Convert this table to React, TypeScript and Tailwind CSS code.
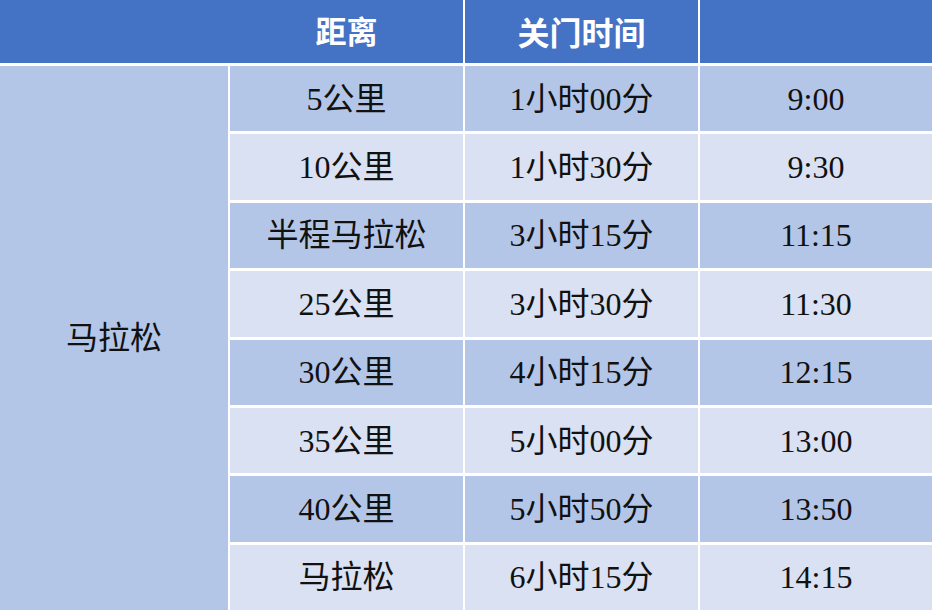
import React from 'react';

interface Row {
  distance: string;
  limit: string;
  close: string;
}

const ROWS: Row[] = [
  { distance: '5公里', limit: '1小时00分', close: '9:00' },
  { distance: '10公里', limit: '1小时30分', close: '9:30' },
  { distance: '半程马拉松', limit: '3小时15分', close: '11:15' },
  { distance: '25公里', limit: '3小时30分', close: '11:30' },
  { distance: '30公里', limit: '4小时15分', close: '12:15' },
  { distance: '35公里', limit: '5小时00分', close: '13:00' },
  { distance: '40公里', limit: '5小时50分', close: '13:50' },
  { distance: '马拉松', limit: '6小时15分', close: '14:15' },
];

const font = { fontFamily: '"Liberation Serif", "Noto Sans CJK SC", serif' };

const App: React.FC = () => {
  return (
    <div
      className="w-[932px] h-[610px] overflow-hidden bg-white text-[#111]"
      style={font}
    >
      <div className="grid h-full grid-cols-[228px_233px_233px_1fr] grid-rows-[63px_repeat(8,1fr)] gap-x-[2px] gap-y-[3px]">
        {/* header */}
        <div className="col-span-2 grid grid-cols-[228px_1fr] bg-[#4472c4]">
          <div />
          <div className="flex items-center justify-center pl-[2px] pt-[4px] text-[31px] font-bold text-white">距离</div>
        </div>
        <div className="flex items-center justify-center bg-[#4472c4] pt-[4px] text-[32px] font-bold text-white">关门时间</div>
        <div className="bg-[#4472c4]" />

        {/* merged left column */}
        <div className="row-span-8 flex items-center justify-center bg-[#b4c6e7] text-[32px]">马拉松</div>

        {ROWS.map((r, i) => {
          const bg = i % 2 === 0 ? 'bg-[#b4c6e7]' : 'bg-[#d9e1f2]';
          return (
            <React.Fragment key={r.distance}>
              <div className={`${bg} flex items-center justify-center text-[32px]`}>{r.distance}</div>
              <div className={`${bg} flex items-center justify-center text-[32px]`}>{r.limit}</div>
              <div className={`${bg} flex items-center justify-center text-[32px]`}>{r.close}</div>
            </React.Fragment>
          );
        })}
      </div>
    </div>
  );
};

export default App;
